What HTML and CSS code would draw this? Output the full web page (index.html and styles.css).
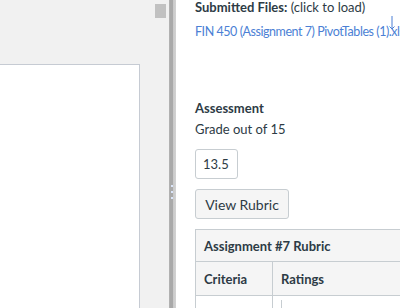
FILE: index.html
```html
<!DOCTYPE html>
<html>
<head>
<meta charset="utf-8">
<link rel="stylesheet" href="styles.css">
</head>
<body>
<div class="app">
  <div class="viewer">
    <div class="doc-area">
      <div class="doc-page"></div>
    </div>
    <div class="scrollbar"><div class="thumb"></div></div>
  </div>
  <div class="divider">
    <div class="grip"><span></span><span></span><span></span></div>
  </div>
  <div class="sidebar">
    <div class="files">
      <p class="files-label"><strong>Submitted Files:</strong> (click to load)</p>
      <div class="file-row">
        <a class="file-link" href="#">FIN 450 (Assignment 7) PivotTables (1).xlsx</a>
        <svg class="dl-icon" width="8" height="16" viewBox="0 0 8 16"><path d="M4 0v13M1.5 10.5l2.5 2.5 2.5-2.5" fill="none" stroke="#4b7fd5" stroke-width="1"/></svg>
      </div>
    </div>
    <div class="assessment">
      <h3 class="section-title">Assessment</h3>
      <p class="grade-label">Grade out of 15</p>
      <div class="grade-input">13.5</div>
      <button class="btn">View Rubric</button>
      <table class="rubric">
        <thead>
          <tr><th colspan="2" class="caption">Assignment #7 Rubric</th></tr>
          <tr><th class="col-criteria">Criteria</th><th class="col-ratings">Ratings</th></tr>
        </thead>
        <tbody>
          <tr><td class="col-criteria"></td><td class="col-ratings"><div class="rating-line"></div></td></tr>
        </tbody>
      </table>
    </div>
  </div>
</div>
</body>
</html>
```
FILE: styles.css
```css
html, body {
  margin: 0;
  padding: 0;
  height: 308px;
  overflow: hidden;
}
body {
  font-family: Lato, "Liberation Sans", sans-serif;
  color: #2d3b45;
  font-size: 13px;
}
.app {
  display: flex;
  height: 308px;
  overflow: hidden;
}
.viewer {
  width: 169px;
  background: #f1f1f1;
  display: flex;
  flex-shrink: 0;
}
.doc-area {
  width: 155px;
  padding-top: 64px;
}
.doc-page {
  width: 139px;
  height: 244px;
  background: #fff;
  border-top: 1px solid #c6cbd3;
  border-right: 1px solid #c6cbd3;
}
.scrollbar {
  width: 14px;
}
.thumb {
  margin-top: 4px;
  width: 11px;
  height: 14px;
  background: #c1c1c1;
}
.divider {
  width: 7px;
  flex-shrink: 0;
  background: linear-gradient(to right, #b9b9b9 0, #a9a9a9 1px, #a9a9a9 4px, #c9c9c9 4px, #d2d2d2 7px);
  display: flex;
  justify-content: center;
  padding-top: 185px;
  box-sizing: border-box;
}
.grip {
  display: flex;
  flex-direction: column;
  gap: 4px;
  margin-left: -2px;
}
.grip span {
  width: 2px;
  height: 2px;
  background: #dbe6fb;
}
.sidebar {
  flex: 1;
  min-width: 0;
  background: #fff;
  padding-left: 19px;
  overflow: hidden;
  white-space: nowrap;
}
.files-label {
  margin: 0;
  line-height: 14px;
}
.files-label strong {
  font-weight: 700;
}
.file-row {
  position: relative;
  margin-top: 10px;
  line-height: 16px;
  height: 16px;
  font-size: 12.5px;
}
.file-link {
  color: #4b7fd5;
  text-decoration: none;
  letter-spacing: -0.45px;
}
.dl-icon {
  position: absolute;
  left: 193px;
  top: -8px;
}
.assessment {
  margin-top: 60px;
}
.section-title {
  margin: 0;
  font-size: 13px;
  font-weight: 700;
  line-height: 16px;
}
.grade-label {
  margin: 5px 0 0;
  line-height: 16px;
}
.grade-input {
  margin-top: 12px;
  width: 43px;
  height: 30px;
  box-sizing: border-box;
  border: 1px solid #c7cdd1;
  border-radius: 3px;
  padding-left: 7px;
  line-height: 28px;
  font-size: 13px;
}
.btn {
  display: block;
  margin-top: 10px;
  height: 30px;
  width: 94px;
  border: 1px solid #c7cdd1;
  border-radius: 3px;
  background: #f5f5f5;
  color: #2d3b45;
  font-family: Lato, "Liberation Sans", sans-serif;
  font-size: 14px;
  padding: 0;
}
.rubric {
  margin-top: 10px;
  border-collapse: collapse;
  width: 240px;
}
.rubric th {
  text-align: left;
  font-weight: 700;
  font-size: 13px;
  background: #f5f5f5;
  border: 1px solid #c7cdd1;
  padding: 0 8px;
}
.rubric .caption {
  height: 31px;
}
.rubric tr:nth-child(2) th {
  height: 33px;
}
.rubric .col-criteria {
  width: 60px;
}
.rubric td {
  border: 1px solid #c7cdd1;
  height: 30px;
  padding: 0 8px;
  vertical-align: top;
}
.rating-line {
  width: 1px;
  height: 20px;
  background: #c7cdd1;
  margin-top: 4px;
}
```
